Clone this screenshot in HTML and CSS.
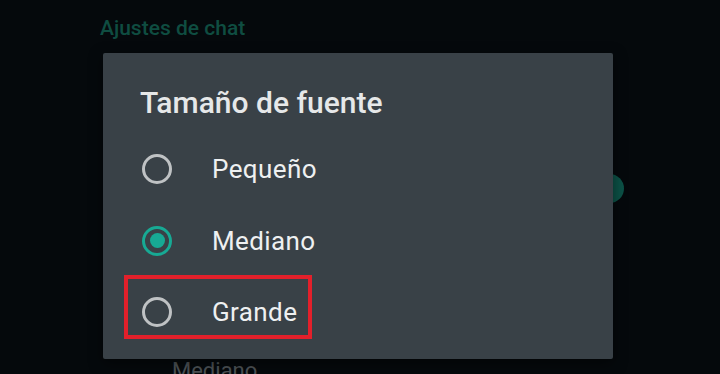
FILE: index.html
```html
<!DOCTYPE html>
<html lang="es">
<head>
<meta charset="utf-8">
<title>Tamaño de fuente</title>
<link rel="stylesheet" href="styles.css">
</head>
<body>
<div class="page">
  <h2 class="section-title">Ajustes de chat</h2>
  <div class="toggle-row">
    <span class="toggle-knob"></span>
  </div>
  <div class="font-row">
    <div class="font-sub">Mediano</div>
  </div>
</div>

<div class="dialog">
  <h1 class="dialog-title">Tamaño de fuente</h1>
  <ul class="options">
    <li class="option">
      <span class="radio"></span>
      <span class="option-label">Pequeño</span>
    </li>
    <li class="option">
      <span class="radio radio-checked"></span>
      <span class="option-label">Mediano</span>
    </li>
    <li class="option option-marked">
      <span class="radio"></span>
      <span class="option-label">Grande</span>
      <span class="highlight"></span>
    </li>
  </ul>
</div>
</body>
</html>
```

FILE: styles.css
```css
html, body {
  margin: 0;
  padding: 0;
}

body {
  width: 720px;
  height: 374px;
  overflow: hidden;
  background: #05090c;
  font-family: Roboto, "Liberation Sans", sans-serif;
  position: relative;
}

.page {
  padding: 15.5px 96px 0 100px;
}

.section-title {
  margin: 0;
  font-size: 21px;
  font-weight: 500;
  line-height: 24.6px;
  color: #0f4d41;
}

.toggle-row {
  display: flex;
  justify-content: flex-end;
  align-items: center;
  height: 60px;
  margin-top: 118.4px;
}

.toggle-knob {
  width: 29px;
  height: 29px;
  border-radius: 50%;
  background: #0c5247;
}

.font-row {
  margin-top: 139.5px;
  padding-left: 72px;
}

.font-sub {
  font-size: 22px;
  line-height: 26px;
  color: #4d5357;
}

.dialog {
  position: absolute;
  left: 103px;
  top: 53px;
  width: 510px;
  height: 306px;
  box-sizing: border-box;
  background: #394147;
  border-radius: 2px;
  padding: 31.8px 0 0 0;
  box-shadow: 0 4px 14px rgba(0, 0, 0, 0.5);
}

.dialog-title {
  margin: 0 0 0 37px;
  font-size: 30px;
  font-weight: 500;
  line-height: 36px;
  color: #e6e8e9;
}

.options {
  list-style: none;
  margin: 12.5px 0 0 0;
  padding: 0;
}

.option {
  position: relative;
  display: flex;
  align-items: center;
  height: 71.5px;
  padding-left: 39px;
}

.radio {
  width: 30px;
  height: 30px;
  box-sizing: border-box;
  border: 3.5px solid #bfc2c4;
  border-radius: 50%;
  flex: none;
  display: flex;
  align-items: center;
  justify-content: center;
}

.radio-checked {
  border-color: #17a994;
}

.radio-checked::after {
  content: "";
  width: 15px;
  height: 15px;
  border-radius: 50%;
  background: #17a994;
}

.option-label {
  margin-left: 40px;
  font-size: 26px;
  letter-spacing: 0.4px;
  color: #eef0f1;
}

.highlight {
  position: absolute;
  left: 21px;
  top: -1.25px;
  width: 188px;
  height: 64px;
  box-sizing: border-box;
  border: 4px solid #e3202b;
}
```
